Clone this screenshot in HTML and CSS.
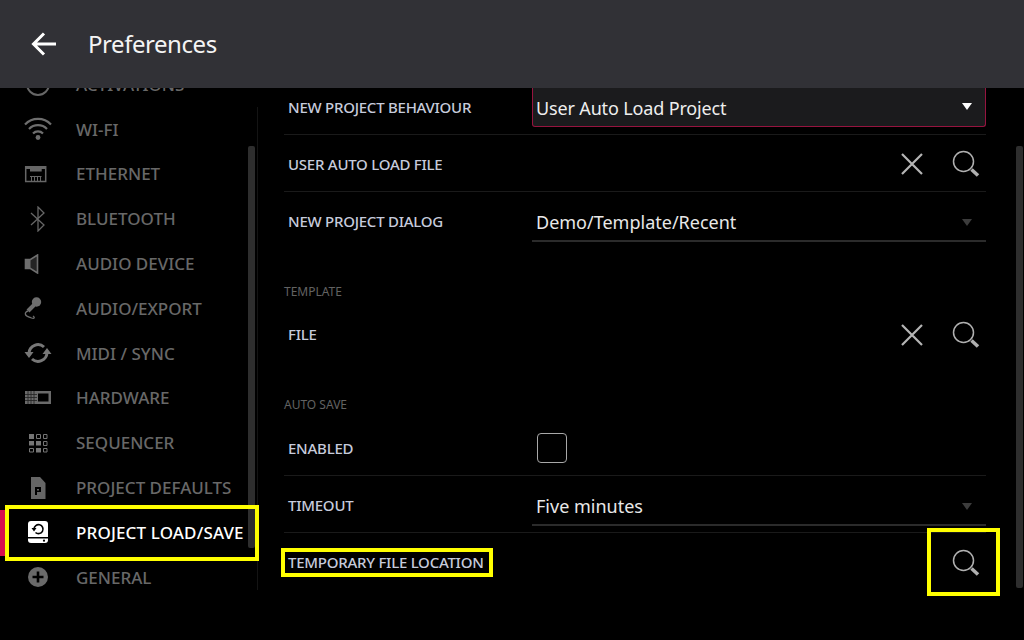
FILE: index.html
```html
<!DOCTYPE html>
<html lang="en">
<head>
<meta charset="utf-8">
<title>Preferences</title>
<link rel="stylesheet" href="styles.css">
</head>
<body>
<div class="app">
  <header class="topbar">
    <svg class="back" width="28" height="26" viewBox="0 0 28 26"><path d="M26 13H4M14 2.500 3.500 13 14 23.500" fill="none" stroke="#fff" stroke-width="3"/></svg>
    <h1 class="title">Preferences</h1>
  </header>
  <div class="main">
    <nav class="sidebar">
      <ul class="navlist">
        <li class="navitem"><span class="navicon"><svg width="28" height="28" viewBox="0 0 28 28"><circle cx="14" cy="14" r="11" fill="none" stroke="#666" stroke-width="2"/></svg></span>ACTIVATIONS</li>
        <li class="navitem"><span class="navicon"><svg width="28" height="24" viewBox="0 0 28 24"><g fill="none" stroke="#6e6e6e" stroke-width="2.200"><path d="M1 7.500a18 18 0 0 1 26 0"/><path d="M5 12a12.500 12.500 0 0 1 18 0"/><path d="M9 16.500a7 7 0 0 1 10 0"/></g><circle cx="14" cy="20.500" r="2.400" fill="#6e6e6e"/></svg></span>WI-FI</li>
        <li class="navitem"><span class="navicon"><svg width="28" height="18" viewBox="0 0 28 18"><path d="M1.700 1.700h20v14.800h-20z" fill="none" stroke="#666" stroke-width="1.500"/><path d="M1.700 1h20v3h-4v2.500H6V4H1.700z" fill="#666"/><path d="M7.500 12v4M10.500 12v4M13.500 12v4M16.500 12v4M6 11.500h11.500" stroke="#666" stroke-width="1"/></svg></span>ETHERNET</li>
        <li class="navitem"><span class="navicon"><svg width="28" height="26" viewBox="0 0 28 26"><path d="M7 7 20 19 14 25V1l6 6L7 19" fill="none" stroke="#666" stroke-width="1.300"/></svg></span>BLUETOOTH</li>
        <li class="navitem"><span class="navicon"><svg width="28" height="20" viewBox="0 0 28 20"><path d="M1.500 5.500h5l7-4.500v18l-7-4.500h-5z" fill="#242424" stroke="#6e6e6e" stroke-width="1.600"/><path d="M1.500 5.500h5v9h-5z" fill="#6e6e6e"/></svg></span>AUDIO DEVICE</li>
        <li class="navitem"><span class="navicon"><svg width="28" height="22" viewBox="0 0 28 22"><circle cx="12.500" cy="5" r="4.700" fill="#6e6e6e"/><path d="M10 8 4 14" stroke="#6e6e6e" stroke-width="4"/><path d="M4 14c-2 .5-3 2-2.500 3.500.5 2 3.500 2.500 6 3.500 3 1 3.500-.5 1.500-2" fill="none" stroke="#6e6e6e" stroke-width="1.300"/></svg></span>AUDIO/EXPORT</li>
        <li class="navitem"><span class="navicon"><svg width="28" height="24" viewBox="0 0 28 24"><g fill="none" stroke="#777" stroke-width="3"><path d="M5 12a9 9 0 0 1 15-6"/><path d="M23 12a9 9 0 0 1-15 6"/></g><path d="M0.500 11h9L5 17zM27.500 13h-9L23 7z" fill="#777"/></svg></span>MIDI / SYNC</li>
        <li class="navitem"><span class="navicon"><svg width="28" height="16" viewBox="0 0 28 16"><path d="M1 1h26v13H1z" fill="#6a6a6a"/><path d="M14 3.500h10.500v8H14z" fill="#000"/><path d="M4 1v13M7 1v13M10 1v13M1 4.500h12M1 7.500h12M1 10.500h12" stroke="#222" stroke-width=".8"/></svg></span>HARDWARE</li>
        <li class="navitem"><span class="navicon"><svg width="20" height="20" viewBox="0 0 20 20"><g fill="#757575"><path d="M1 1h5v5H1zM1 8h5v4.500H1zM8 8h5v4.500H8zM8 15h5v4.500H8z"/></g><g fill="none" stroke="#757575"><path d="M8.500 1.500h4v4h-4zM15.500 1.500h3.500v4h-3.500zM15.500 8.500h3.500v4h-3.500zM1.500 15.500h4v3.500h-4zM15.500 15.500h3.500v3.500h-3.500z"/></g></svg></span>SEQUENCER</li>
        <li class="navitem"><span class="navicon"><svg width="16" height="22" viewBox="0 0 16 22"><path d="M1 0h9l5.500 6v16H1z" fill="#666"/><path d="M5 10h6v5H7v3H5zM7 12v1.500h2V12z" fill="#000" fill-rule="evenodd"/></svg></span>PROJECT DEFAULTS</li>
        <li class="navitem navitem-active"><span class="navicon"><svg width="20" height="22" viewBox="0 0 20 22"><path d="M3 0h14a3 3 0 0 1 3 3v13H0V3a3 3 0 0 1 3-3z" fill="#fff"/><path d="M0 17.500h20V19a3 3 0 0 1-3 3H3a3 3 0 0 1-3-3z" fill="#fff"/><circle cx="16" cy="19.700" r="1.100" fill="#000"/><path d="M6 8a4.500 4.500 0 1 1 1.500 3.500" fill="none" stroke="#000" stroke-width="1.600"/><path d="M3.500 7h5L6 10.500z" fill="#000"/></svg></span>PROJECT LOAD/SAVE</li>
        <li class="navitem"><span class="navicon"><svg width="20" height="20" viewBox="0 0 20 20"><circle cx="10" cy="10" r="10" fill="#6a6a6a"/><path d="M10 4.500v11M4.500 10h11" stroke="#000" stroke-width="2.600"/></svg></span>GENERAL</li>
      </ul>
      <div class="track"></div>
      <div class="thumb"></div>
    </nav>
    <section class="content">
      <div class="prefs">
        <div class="row row-first">
          <span class="label">NEW PROJECT BEHAVIOUR</span>
          <div class="select select-open"><span>User Auto Load Project</span><span class="caret"></span></div>
        </div>
        <div class="row">
          <span class="label">USER AUTO LOAD FILE</span>
          <div class="actions">
            <svg class="x" width="24" height="24" viewBox="0 0 24 24"><path d="M2 2 22 22M22 2 2 22" stroke="#b5b5b5" stroke-width="2.200"/></svg>
            <svg class="search" width="28" height="28" viewBox="0 0 28 28"><circle cx="11.500" cy="11.500" r="10" fill="none" stroke="#b0b0b0" stroke-width="1.500"/><path d="M19.500 19.500l6.500 6" stroke="#b0b0b0" stroke-width="3.500"/></svg>
          </div>
        </div>
        <div class="row row-plain">
          <span class="label">NEW PROJECT DIALOG</span>
          <div class="select"><span>Demo/Template/Recent</span><span class="caret caret-dim"></span></div>
        </div>
        <div class="section section-short">TEMPLATE</div>
        <div class="row row-plain">
          <span class="label">FILE</span>
          <div class="actions">
            <svg class="x" width="24" height="24" viewBox="0 0 24 24"><path d="M2 2 22 22M22 2 2 22" stroke="#b5b5b5" stroke-width="2.200"/></svg>
            <svg class="search" width="28" height="28" viewBox="0 0 28 28"><circle cx="11.500" cy="11.500" r="10" fill="none" stroke="#b0b0b0" stroke-width="1.500"/><path d="M19.500 19.500l6.500 6" stroke="#b0b0b0" stroke-width="3.500"/></svg>
          </div>
        </div>
        <div class="section">AUTO SAVE</div>
        <div class="row">
          <span class="label">ENABLED</span>
          <div class="checkbox"></div>
        </div>
        <div class="row">
          <span class="label">TIMEOUT</span>
          <div class="select"><span>Five minutes</span><span class="caret caret-dim"></span></div>
        </div>
        <div class="row row-plain">
          <span class="label">TEMPORARY FILE LOCATION</span>
          <div class="actions">
            <svg class="search" width="28" height="28" viewBox="0 0 28 28"><circle cx="11.500" cy="11.500" r="10" fill="none" stroke="#b0b0b0" stroke-width="1.500"/><path d="M19.500 19.500l6.500 6" stroke="#b0b0b0" stroke-width="3.500"/></svg>
          </div>
        </div>
      </div>
      <div class="thumb thumb-content"></div>
    </section>
  </div>
  <div class="mark mark-nav"></div>
  <div class="mark mark-label"></div>
  <div class="mark mark-search"></div>
</div>
</body>
</html>
```
FILE: styles.css
```css
* { box-sizing: border-box; }
html, body { margin: 0; height: 100%; }
body { background: #000; font-family: "Noto Sans", "Open Sans", sans-serif; overflow: hidden; }
.app { position: relative; width: 1024px; height: 640px; display: flex; flex-direction: column; background: #000; }
.topbar { height: 88px; flex: none; background: #313136; display: flex; align-items: center; padding: 0 0 0 30px; position: relative; z-index: 2; }
.back { display: block; margin-top: -1px; }
.title { margin: 0 0 0 30px; font-size: 24px; font-weight: 400; letter-spacing: -.45px; color: #f4f4f4; line-height: 1; }
.main { flex: 1; display: flex; min-height: 0; overflow: hidden; }
.sidebar { width: 258px; flex: none; position: relative; }
.navlist { list-style: none; margin: -26px 0 0; padding: 0; }
.navitem { height: 44.800px; display: flex; align-items: center; font-size: 17px; font-weight: 500; color: #686868; position: relative; }
.navicon { width: 76px; flex: none; display: flex; justify-content: center; }
.navicon svg { display: block; }
.navitem-active { color: #fff; letter-spacing: .15px; }
.navitem-active::before { content: ""; position: absolute; left: 0; top: 0; bottom: -1px; width: 5px; background: #d8104f; }
.track { position: absolute; left: 257px; top: 19px; bottom: 50px; width: 1px; background: #141414; }
.thumb { position: absolute; left: 248px; top: 58px; width: 7px; height: 402px; background: #2e2e2e; border-radius: 2px; }
.content { flex: 1; position: relative; min-width: 0; }
.prefs { padding: 0 38px 0 26px; margin-top: -10px; }
.row { height: 57px; display: flex; align-items: center; padding: 1px 0 0 4px; border-bottom: 1px solid #1a1a1a; }
.row-plain { border-bottom: 0; }
.label { width: 244px; flex: none; font-size: 15px; font-weight: 500; letter-spacing: -.25px; color: #c6cbdc; white-space: nowrap; }
.select { flex: 1; align-self: flex-start; margin-top: 11px; height: 38px; padding: 0 14px 0 4px; display: flex; align-items: center; justify-content: space-between; font-size: 18px; color: #e8e8e8; border-bottom: 2px solid #2b2b2b; }
.select-open { margin-top: -8px; height: 56px; padding: 19px 13px 0 3px; background: #1b1b1d; border: 1px solid #96143f; border-top: 0; border-radius: 0 0 3px 3px; color: #eee; }
.select-open span:first-child { letter-spacing: -.15px; }
.select-open .caret { margin-bottom: 3px; }
.caret { width: 0; height: 0; border-left: 5.500px solid transparent; border-right: 5.500px solid transparent; border-top: 7px solid #fff; }
.caret-dim { border-top-color: #3c3c3c; }
.actions { flex: 1; display: flex; justify-content: flex-end; align-items: center; padding-right: 6px; gap: 28px; margin-top: 1px; }
.checkbox { width: 30px; height: 30px; margin: 1px 0 0 5px; border: 1px solid #a8a8a8; border-radius: 4px; }
.section { height: 57px; padding-top: 35px; font-size: 12px; line-height: 16px; color: #626262; }
.section-short { height: 56px; }
.thumb-content { left: 758px; top: 58px; height: 442px; }
.mark { position: absolute; border: 4px solid #ffff00; z-index: 3; }
.mark-nav { left: 5px; top: 505px; width: 254px; height: 56px; }
.mark-label { left: 281px; top: 548px; width: 212px; height: 29px; }
.mark-search { left: 927px; top: 528px; width: 73px; height: 68px; }
```
